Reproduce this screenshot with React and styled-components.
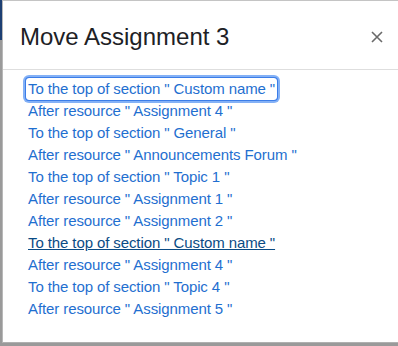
import React from 'react';
import styled, { createGlobalStyle } from 'styled-components';

const GlobalStyle = createGlobalStyle`
  html, body {
    margin: 0;
    padding: 0;
    background: #8c8c8c;
    overflow: hidden;
  }
  body {
    font-family: "Liberation Sans", Arial, sans-serif;
  }
`;

const Page = styled.div`
  width: 398px;
  height: 346px;
  display: flex;
  background: linear-gradient(to bottom, #1d3f73 0, #1d3f73 40px, #9a9a9a 40px);
`;

const Modal = styled.div`
  margin-left: 2px;
  width: 396px;
  height: 343px;
  box-sizing: border-box;
  background: #fff;
  border-top: 1px solid #c4c4c4;
  border-left: 1px solid #b8b8b8;
  border-bottom: 1px solid #b0b0b0;
  display: flex;
  flex-direction: column;
`;

const Header = styled.div`
  height: 69px;
  box-sizing: border-box;
  border-bottom: 1px solid #dedede;
  display: flex;
  align-items: center;
  justify-content: space-between;
  padding: 3px 13px 0 17px;
`;

const Title = styled.h5`
  margin: 0;
  font-size: 24px;
  font-weight: 400;
  color: #1d2125;
`;

const Close = styled.button`
  border: 0;
  background: none;
  padding: 0;
  width: 16px;
  height: 16px;
  display: flex;
  align-items: center;
  justify-content: center;
  cursor: pointer;
`;

const Body = styled.div`
  padding: 8px 0 0 23px;
  display: flex;
  flex-direction: column;
  align-items: flex-start;
`;

const Target = styled.a`
  display: inline-block;
  font-size: 15px;
  line-height: 22px;
  height: 22px;
  padding: 0 2px;
  letter-spacing: -0.1px;
  color: ${p => (p.$hover ? '#0a4b85' : '#1f6fd0')};
  text-decoration: ${p => (p.$hover ? 'underline' : 'none')};
  border-radius: 3px;
  box-shadow: ${p =>
    p.$focus ? '0 0 0 1px #3b7de8, 0 0 0 3px #84b1f6' : 'none'};
  white-space: pre;
  cursor: pointer;
`;

const targets = [
  'To the top of section " Custom name "',
  'After resource " Assignment 4 "',
  'To the top of section " General "',
  'After resource " Announcements Forum "',
  'To the top of section " Topic 1 "',
  'After resource " Assignment 1 "',
  'After resource " Assignment 2 "',
  'To the top of section " Custom name "',
  'After resource " Assignment 4 "',
  'To the top of section " Topic 4 "',
  'After resource " Assignment 5 "',
];

export default function App() {
  return (
    <>
      <GlobalStyle />
      <Page>
        <Modal>
          <Header>
            <Title>Move Assignment 3</Title>
            <Close aria-label="Close">
              <svg width="12" height="12" viewBox="0 0 12 12">
                <path d="M1 1L11 11M11 1L1 11" stroke="#6a6a6a" strokeWidth="1.6" />
              </svg>
            </Close>
          </Header>
          <Body>
            {targets.map((t, i) => (
              <Target key={i} $focus={i === 0} $hover={i === 7}>
                {t}
              </Target>
            ))}
          </Body>
        </Modal>
      </Page>
    </>
  );
}
